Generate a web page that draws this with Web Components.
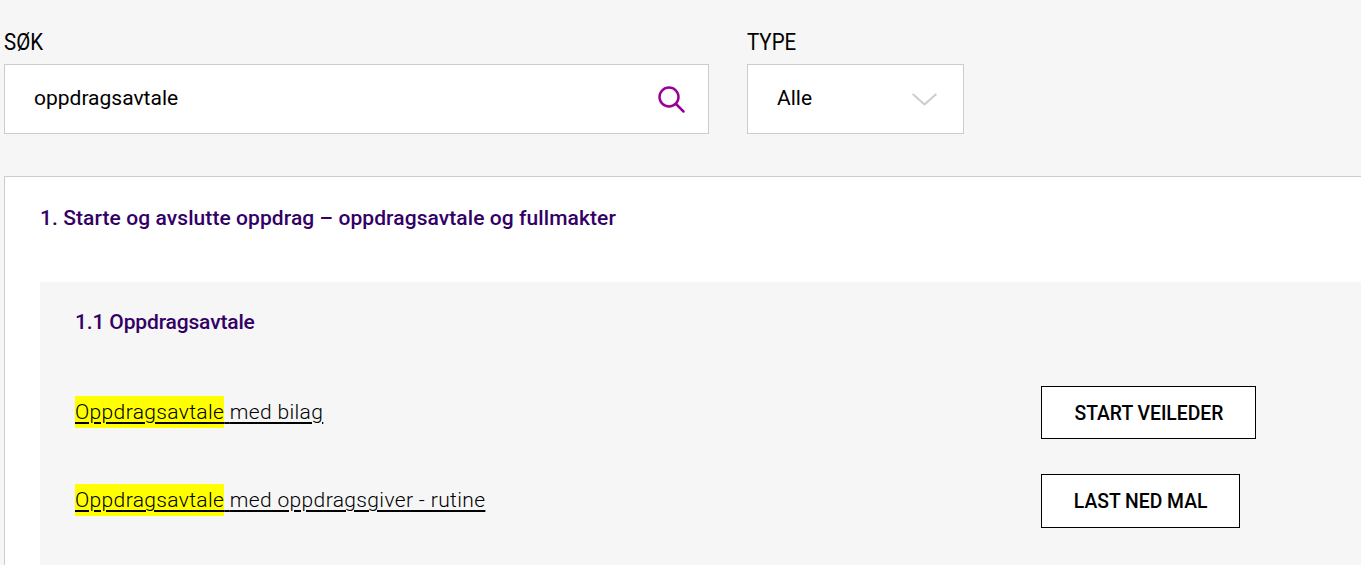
<!DOCTYPE html>
<html lang="no">
<head>
<meta charset="utf-8">
<title>Søk</title>
<style>
  html, body { margin: 0; height: 100%; overflow: hidden; background: #f6f6f6; }
  body { font-family: Roboto, "Liberation Sans", sans-serif; color: #000; }
</style>
</head>
<body>
<template id="filter-field-tpl">
  <style>
    :host { display: block; }
    label {
      display: block;
      height: 64px;
      box-sizing: border-box;
      padding-top: 28px;
      font-size: 23px;
      line-height: 30px;
    }
    label span {
      display: inline-block;
      transform: scaleX(0.89);
      transform-origin: left center;
    }
    .box {
      display: flex;
      align-items: center;
      justify-content: space-between;
      height: 70px;
      box-sizing: border-box;
      background: #fff;
      border: 1px solid #ccc;
      padding: 0 23px 0 29px;
      font-size: 21px;
    }
    .value { position: relative; top: -1px; }
    ::slotted(svg) { display: block; }
  </style>
  <label><span></span></label>
  <div class="box"><span class="value"></span><slot></slot></div>
</template>

<template id="result-panel-tpl">
  <style>
    :host {
      display: block;
      margin: 42px -60px 0 4px;
      background: #fff;
      border: solid #ccc;
      border-width: 1px 1px 0 1px;
      padding-left: 35px;
      color: #330066;
    }
    h2 {
      margin: 0;
      height: 105px;
      box-sizing: border-box;
      padding-top: 27px;
      font-size: 21px;
      line-height: 28px;
      font-weight: 500;
      letter-spacing: 0.08px;
    }
  </style>
  <h2></h2>
  <slot></slot>
</template>

<template id="result-section-tpl">
  <style>
    :host {
      display: block;
      background: #f6f6f6;
      padding: 0 0 40px 35px;
      min-height: 300px;
    }
    h3 {
      margin: 0;
      height: 103.6px;
      box-sizing: border-box;
      padding-top: 26px;
      font-size: 21px;
      line-height: 28px;
      font-weight: 500;
      letter-spacing: -0.15px;
    }
  </style>
  <h3></h3>
  <slot></slot>
</template>

<template id="result-row-tpl">
  <style>
    :host {
      display: grid;
      grid-template-columns: 966px auto;
      justify-content: start;
      align-items: center;
      margin-bottom: 35px;
      color: #000;
    }
    .title { margin-top: -1px; }
    a {
      color: inherit;
      font-size: 21px;
      font-weight: 300;
      line-height: 28px;
      letter-spacing: 0.36px;
      text-decoration: underline;
      text-decoration-thickness: 2px;
      text-underline-offset: 3px;
    }
    mark {
      background: #ff0;
      color: inherit;
      padding: 4px 0;
    }
    button {
      font: 500 21px/28px Roboto, "Liberation Sans", sans-serif;
      color: #000;
      background: #fff;
      border: 1px solid #000;
      border-radius: 0;
      height: 53.5px;
      padding: 1px 25.8px 0;
      margin: 0;
      text-transform: uppercase;
    }
    button span {
      display: inline-block;
      transform: scaleX(0.92);
    }
  </style>
  <div class="title"><a href="#"><mark><slot name="hit"></slot></mark> <slot name="rest"></slot></a></div>
  <button type="button"><span></span></button>
</template>

<search-form></search-form>

<script>
class FilterField extends HTMLElement {
  constructor() {
    super();
    const shadow = this.attachShadow({ mode: "open" });
    shadow.appendChild(document.getElementById("filter-field-tpl").content.cloneNode(true));
    shadow.querySelector("label span").textContent = this.getAttribute("label");
    shadow.querySelector(".value").textContent = this.getAttribute("value");
  }
}

class ResultPanel extends HTMLElement {
  constructor() {
    super();
    const shadow = this.attachShadow({ mode: "open" });
    shadow.appendChild(document.getElementById("result-panel-tpl").content.cloneNode(true));
    shadow.querySelector("h2").textContent = this.getAttribute("heading");
  }
}

class ResultSection extends HTMLElement {
  constructor() {
    super();
    const shadow = this.attachShadow({ mode: "open" });
    shadow.appendChild(document.getElementById("result-section-tpl").content.cloneNode(true));
    shadow.querySelector("h3").textContent = this.getAttribute("heading");
  }
}

class ResultRow extends HTMLElement {
  constructor() {
    super();
    const shadow = this.attachShadow({ mode: "open" });
    shadow.appendChild(document.getElementById("result-row-tpl").content.cloneNode(true));
    shadow.querySelector("button span").textContent = this.getAttribute("action");
  }
}

class SearchForm extends HTMLElement {
  constructor() {
    super();
    const shadow = this.attachShadow({ mode: "open" });
    shadow.innerHTML = `
      <style>
        :host { display: block; }
        .filters {
          display: grid;
          grid-template-columns: 705px 217px;
          column-gap: 38px;
          padding-left: 4px;
        }
      </style>
      <div class="filters">
        <filter-field label="SØK" value="oppdragsavtale">
          <svg width="28" height="28" viewBox="0 0 28 28" fill="none" stroke="#990099" stroke-width="2.5">
            <circle cx="12" cy="12" r="9.5"/>
            <path d="M19 19l7.5 7.5" stroke-linecap="round"/>
          </svg>
        </filter-field>
        <filter-field label="TYPE" value="Alle">
          <svg width="25" height="13" viewBox="0 0 25 13" fill="none" stroke="#ccc" stroke-width="2" style="margin-right:3px">
            <path d="M.7 1l11.8 10.5L24.3 1"/>
          </svg>
        </filter-field>
      </div>
      <result-panel heading="1. Starte og avslutte oppdrag – oppdragsavtale og fullmakter">
        <result-section heading="1.1 Oppdragsavtale">
          <result-row action="Start veileder">
            <span slot="hit">Oppdragsavtale</span><span slot="rest">med bilag</span>
          </result-row>
          <result-row action="Last ned mal">
            <span slot="hit">Oppdragsavtale</span><span slot="rest">med oppdragsgiver - rutine</span>
          </result-row>
        </result-section>
      </result-panel>
    `;
  }
}

customElements.define("filter-field", FilterField);
customElements.define("result-panel", ResultPanel);
customElements.define("result-section", ResultSection);
customElements.define("result-row", ResultRow);
customElements.define("search-form", SearchForm);
</script>
</body>
</html>
